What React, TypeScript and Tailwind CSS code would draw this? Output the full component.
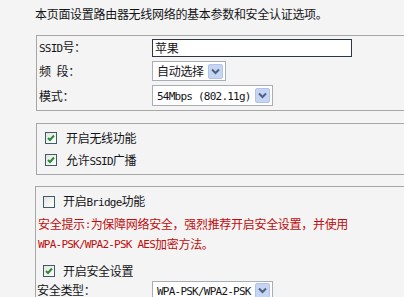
import React from "react";

// ASCII runs get a half-width mono face, like the old SimSun pages
const Txt = ({ s }: { s: string }) => {
  const parts = s.match(/[\x20-\x7e]+|[^\x20-\x7e]+/g) ?? [];
  return (
    <>
      {parts.map((p, i) =>
        /[\x20-\x7e]/.test(p[0]) ? (
          <span
            key={i}
            className="whitespace-pre font-['DejaVu_Sans_Mono',monospace] text-[11px] tracking-[-0.77px]"
          >
            {p}
          </span>
        ) : (
          <span key={i}>{p}</span>
        )
      )}
    </>
  );
};

const Arrow = () => (
  <span className="flex h-[15px] w-[15px] items-center justify-center rounded-[2px] border border-[#b1c3ea] bg-[#c6d5f1]">
    <svg width="9" height="7" viewBox="0 0 9 7">
      <path d="M1 1.5 L4.5 5 L8 1.5" stroke="#4d6185" strokeWidth="2" fill="none" />
    </svg>
  </span>
);

const Select = ({ value, className }: { value: string; className: string }) => (
  <div
    className={`flex items-center justify-between border border-[#a9aeb5] bg-white pl-[4px] pr-[2px] ${className}`}
  >
    <span className="leading-none">
      <Txt s={value} />
    </span>
    <Arrow />
  </div>
);

const Checkbox = ({ checked }: { checked?: boolean }) => (
  <span className="flex h-[12px] w-[12px] items-center justify-center border border-[#3f5c6a] bg-gradient-to-br from-[#e4e4de] to-white">
    {checked && (
      <svg width="8" height="8" viewBox="0 0 8 8">
        <path d="M1 4 L3 6 L7 1.5" stroke="#2b8a3a" strokeWidth="2" fill="none" />
      </svg>
    )}
  </span>
);

const CheckRow = ({ label, checked, className }: { label: string; checked?: boolean; className: string }) => (
  <div className={`flex items-center ${className}`}>
    <Checkbox checked={checked} />
    <span className="leading-none">
      <Txt s={label} />
    </span>
  </div>
);

export default function App() {
  return (
    <div className="relative h-[297px] w-[404px] overflow-hidden bg-[#f4f4f4] font-['Noto_Sans_CJK_SC',sans-serif] text-[12px] tracking-[-0.3px] text-[#141418]">
      <div className="pl-[35px] pt-[6px] leading-[16px]">本页面设置路由器无线网络的基本参数和安全认证选项。</div>

      {/* basic settings */}
      <div className="ml-[36px] mt-[13px] w-[400px] border border-[#a6a6a6] pb-[2px]">
        <div className="flex h-[23px] items-center">
          <span className="w-[115px] pl-[2px] leading-none">
            <Txt s="SSID号：" />
          </span>
          <div className="flex h-[18px] w-[200px] items-center border border-[#2c3645] bg-white pl-[2px] leading-none">
            苹果
          </div>
        </div>
        <div className="flex h-[24px] items-center">
          <span className="w-[115px] pl-[2px] leading-none">
            <Txt s="频 段：" />
          </span>
          <Select value="自动选择" className="h-[20px] w-[74px]" />
        </div>
        <div className="flex h-[25px] items-center">
          <span className="w-[115px] pl-[2px] leading-none">模式：</span>
          <Select value="54Mbps (802.11g)" className="h-[21px] w-[121px]" />
        </div>
      </div>

      {/* wireless switches */}
      <div className="ml-[36px] mt-[12px] w-[400px] border border-[#a6a6a6] py-[3px]">
        <CheckRow label="开启无线功能" checked className="h-[22px] gap-[9px] pl-[8px]" />
        <CheckRow label="允许SSID广播" checked className="h-[22px] gap-[9px] pl-[8px]" />
      </div>

      {/* security */}
      <div className="ml-[35px] mt-[11px] w-[400px] border border-[#a6a6a6]">
        <CheckRow label="开启Bridge功能" className="h-[27px] gap-[8px] pl-[7px] pt-[2px]" />
        <div className="pl-[2px] text-[#c00c0c]">
          <div className="flex h-[20px] items-center leading-none">
            <Txt s="安全提示:为保障网络安全，强烈推荐开启安全设置，并使用" />
          </div>
          <div className="flex h-[20px] items-center leading-none">
            <Txt s="WPA-PSK/WPA2-PSK AES加密方法。" />
          </div>
        </div>
        <CheckRow label="开启安全设置" checked className="h-[27px] gap-[8px] pl-[7px] pt-[6px]" />
        <div className="flex h-[20px] items-start">
          <span className="w-[116px] pl-[1px] pt-[3px] leading-none">安全类型：</span>
          <Select value="WPA-PSK/WPA2-PSK" className="h-[19px] w-[121px]" />
        </div>
      </div>
    </div>
  );
}
